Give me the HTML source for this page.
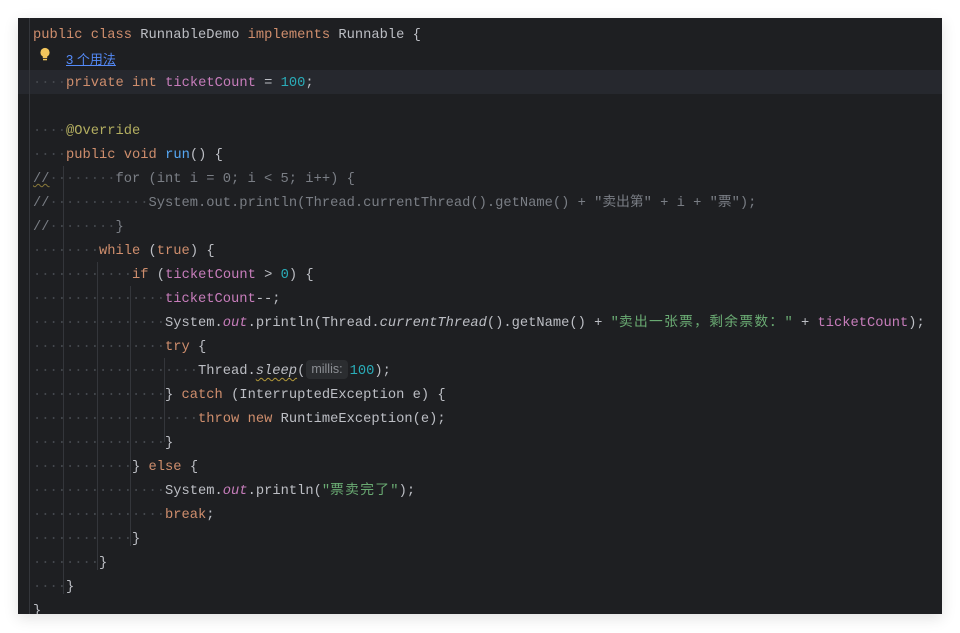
<!DOCTYPE html>
<html><head><meta charset="utf-8"><style>
html,body{margin:0;padding:0;width:960px;height:633px;background:#fff;overflow:hidden}
#ed{position:absolute;left:18px;top:18px;width:924px;height:596px;background:#1e1f22;overflow:hidden;box-shadow:0 4px 14px rgba(0,0,0,.12)}
.code{position:absolute;left:15px;top:6px;font-family:"Liberation Mono","Noto Sans CJK SC",monospace;font-size:13.75px;color:#bcbec4}
.l{height:24px;line-height:24px;white-space:pre}
.w{color:#44474d}
.k{color:#cf8e6d}.f{color:#c77dbb}.n{color:#2aacb8}.s{color:#6aab73}.a{color:#b3ae60}.m{color:#56a8f5}.c{color:#7a7e85}.i{font-style:italic}
.cj{letter-spacing:1.3px}
.hl{position:absolute;left:0;top:52px;width:924px;height:24px;background:#26282e}
.g{position:absolute;width:1px;background:#34363b}
.hint{display:inline-block;background:#2b2d30;color:#8c8f94;font-family:"Liberation Sans",sans-serif;font-size:12.5px;line-height:19px;padding:0 5px;border-radius:4px;margin:0 2px 0 1px;vertical-align:1px}
.u{text-decoration:underline wavy #b39a3a;text-decoration-thickness:1px;text-underline-offset:3px}
.lnk{color:#548af7;text-decoration:underline;font-family:"Liberation Sans","Noto Sans CJK SC",sans-serif;font-size:13px}
</style></head><body>
<div id="ed">
<div class="hl"></div>
<div class="g" style="left:11px;top:0;height:596px"></div>
<div class="g" style="left:45px;top:148px;height:428px"></div>
<div class="g" style="left:79px;top:244px;height:308px"></div>
<div class="g" style="left:112px;top:268px;height:260px"></div>
<div class="g" style="left:146px;top:340px;height:84px"></div>
<svg style="position:absolute;left:21px;top:29px" width="12" height="16" viewBox="0 0 12 16"><circle cx="6" cy="5.5" r="4.6" fill="#f2c55c"/><rect x="3.8" y="9" width="4.4" height="2.2" fill="#f2c55c"/><rect x="4" y="12" width="4" height="1.3" fill="#f2c55c"/></svg>
<div class="code"><div class="l"><span class="k">public</span> <span class="k">class</span> RunnableDemo <span class="k">implements</span> Runnable {</div><div class="l">    <span class="lnk">3 个用法</span></div><div class="l"><span class="w">····</span><span class="k">private</span> <span class="k">int</span> <span class="f">ticketCount</span> = <span class="n">100</span>;</div><div class="l"> </div><div class="l"><span class="w">····</span><span class="a">@Override</span></div><div class="l"><span class="w">····</span><span class="k">public</span> <span class="k">void</span> <span class="m">run</span>() {</div><div class="l c"><span style="text-decoration:underline wavy #8a7a3a;text-decoration-thickness:1px">//</span><span class="w">········</span>for (int i = 0; i &lt; 5; i++) {</div><div class="l c">//<span class="w">············</span>System.out.println(Thread.currentThread().getName() + "卖出第" + i + "票");</div><div class="l c">//<span class="w">········</span>}</div><div class="l"><span class="w">········</span><span class="k">while</span> (<span class="k">true</span>) {</div><div class="l"><span class="w">············</span><span class="k">if</span> (<span class="f">ticketCount</span> &gt; <span class="n">0</span>) {</div><div class="l"><span class="w">················</span><span class="f">ticketCount</span>--;</div><div class="l"><span class="w">················</span>System.<span class="f i">out</span>.println(Thread.<span class="i">currentThread</span>().getName() + <span class="s">"<span class="cj">卖出一张票，剩余票数：</span>"</span> + <span class="f">ticketCount</span>);</div><div class="l"><span class="w">················</span><span class="k">try</span> {</div><div class="l"><span class="w">····················</span>Thread.<span class="i u">sleep</span>(<span class="hint">millis:</span><span class="n">100</span>);</div><div class="l"><span class="w">················</span>} <span class="k">catch</span> (InterruptedException e) {</div><div class="l"><span class="w">····················</span><span class="k">throw</span> <span class="k">new</span> RuntimeException(e);</div><div class="l"><span class="w">················</span>}</div><div class="l"><span class="w">············</span>} <span class="k">else</span> {</div><div class="l"><span class="w">················</span>System.<span class="f i">out</span>.println(<span class="s">"<span class="cj">票卖完了</span>"</span>);</div><div class="l"><span class="w">················</span><span class="k">break</span>;</div><div class="l"><span class="w">············</span>}</div><div class="l"><span class="w">········</span>}</div><div class="l"><span class="w">····</span>}</div><div class="l">}</div></div>
</div>
</body></html>
